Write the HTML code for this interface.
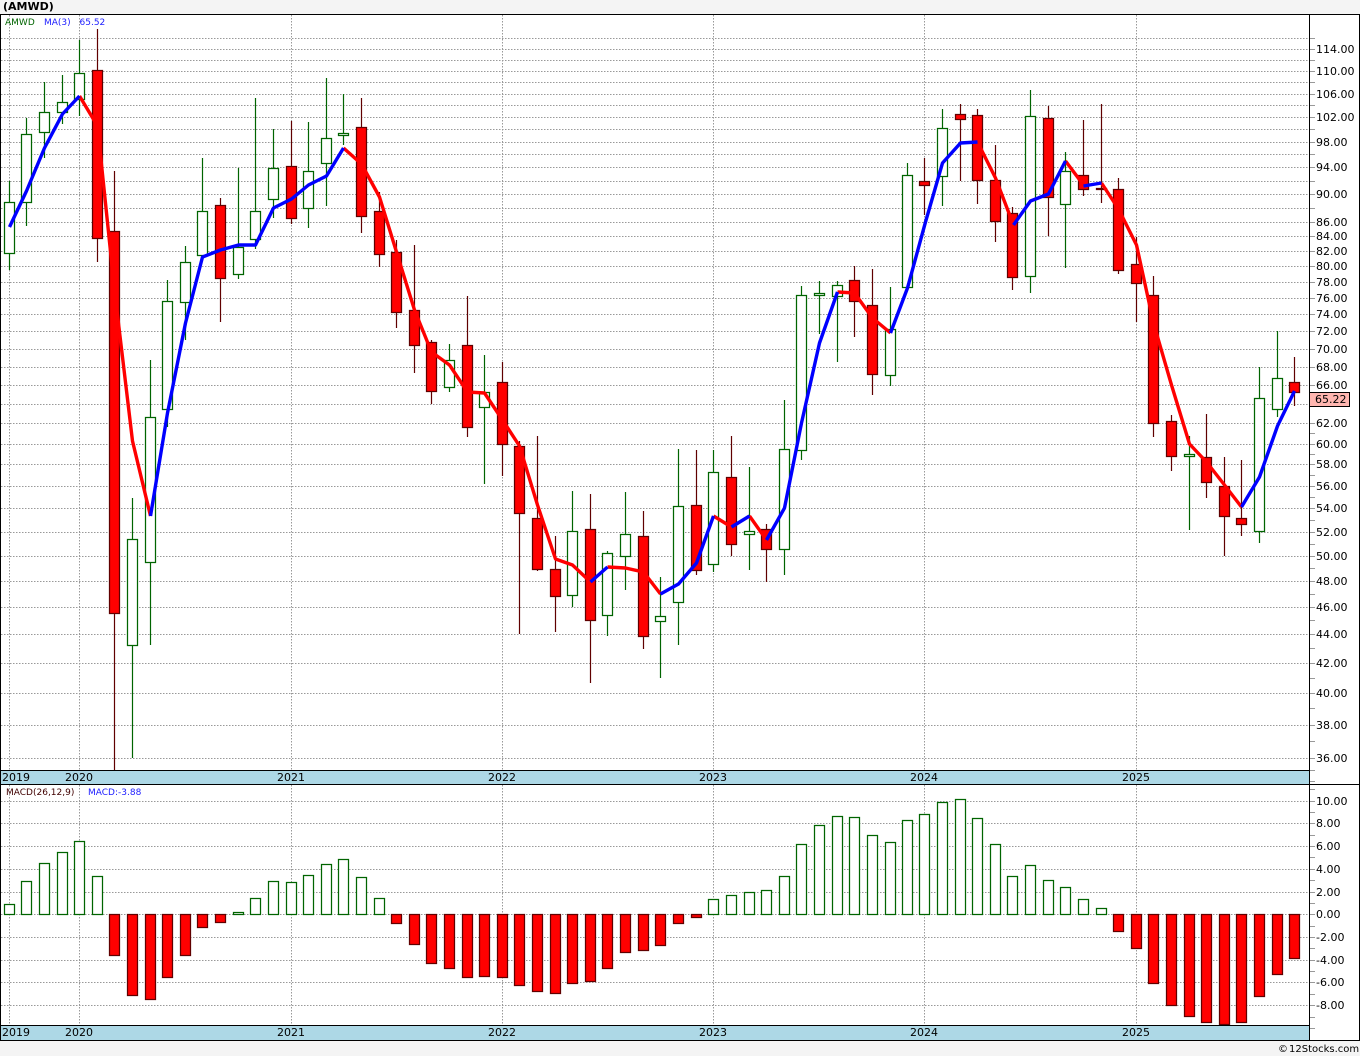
<!DOCTYPE html>
<html><head><meta charset="utf-8"><title>AMWD</title>
<style>
html,body{margin:0;padding:0;background:#f4f4f4}
svg{display:block}
text{font-family:"DejaVu Sans","Liberation Sans",sans-serif;font-size:11px;fill:#000}
</style></head><body>
<svg xmlns="http://www.w3.org/2000/svg" width="1360" height="1056" viewBox="0 0 1360 1056">
<rect width="1360" height="1056" fill="#f4f4f4"/>
<rect x="0" y="14" width="1360" height="1026" fill="#fff"/>
<rect x="0" y="770" width="1309" height="14" fill="#add8e6"/>
<rect x="0" y="1025" width="1309" height="15" fill="#add8e6"/>
<g fill="none">
<path stroke="#999" stroke-dasharray="1.5 1.5" d="M1 38.5H1309M1 49.5H1309M1 60.5H1309M1 71.5H1309M1 82.5H1309M1 94.5H1309M1 105.5H1309M1 117.5H1309M1 129.5H1309M1 142.5H1309M1 154.5H1309M1 167.5H1309M1 181.5H1309M1 194.5H1309M1 208.5H1309M1 222.5H1309M1 236.5H1309M1 251.5H1309M1 266.5H1309M1 282.5H1309M1 298.5H1309M1 314.5H1309M1 331.5H1309M1 349.5H1309M1 367.5H1309M1 385.5H1309M1 404.5H1309M1 423.5H1309M1 444.5H1309M1 464.5H1309M1 486.5H1309M1 508.5H1309M1 532.5H1309M1 556.5H1309M1 581.5H1309M1 607.5H1309M1 634.5H1309M1 663.5H1309M1 693.5H1309M1 725.5H1309M1 758.5H1309
M1 801.5H1309M1 823.5H1309M1 846.5H1309M1 869.5H1309M1 892.5H1309M1 914.5H1309M1 937.5H1309M1 960.5H1309M1 982.5H1309M1 1005.5H1309
M9.5 15V770M79.5 15V770M291.5 15V770M502.5 15V770M713.5 15V770M924.5 15V770M1136.5 15V770
M9.5 785V1025M79.5 785V1025M291.5 785V1025M502.5 785V1025M713.5 785V1025M924.5 785V1025M1136.5 785V1025"/>
<path stroke="#999" shape-rendering="crispEdges" d="M1310 38.5H1315M1310 49.5H1315M1310 60.5H1315M1310 71.5H1315M1310 82.5H1315M1310 94.5H1315M1310 105.5H1315M1310 117.5H1315M1310 129.5H1315M1310 142.5H1315M1310 154.5H1315M1310 167.5H1315M1310 181.5H1315M1310 194.5H1315M1310 208.5H1315M1310 222.5H1315M1310 236.5H1315M1310 251.5H1315M1310 266.5H1315M1310 282.5H1315M1310 298.5H1315M1310 314.5H1315M1310 331.5H1315M1310 349.5H1315M1310 367.5H1315M1310 385.5H1315M1310 404.5H1315M1310 423.5H1315M1310 433.5H1315M1310 444.5H1315M1310 454.5H1315M1310 464.5H1315M1310 475.5H1315M1310 486.5H1315M1310 497.5H1315M1310 508.5H1315M1310 520.5H1315M1310 532.5H1315M1310 544.5H1315M1310 556.5H1315M1310 568.5H1315M1310 581.5H1315M1310 594.5H1315M1310 607.5H1315M1310 620.5H1315M1310 634.5H1315M1310 648.5H1315M1310 663.5H1315M1310 678.5H1315M1310 693.5H1315M1310 708.5H1315M1310 725.5H1315M1310 741.5H1315M1310 758.5H1315M1310 770.5H1315M1310 781.5H1315
M1310 789.5H1315M1310 801.5H1315M1310 812.5H1315M1310 823.5H1315M1310 835.5H1315M1310 846.5H1315M1310 857.5H1315M1310 869.5H1315M1310 880.5H1315M1310 892.5H1315M1310 903.5H1315M1310 914.5H1315M1310 926.5H1315M1310 937.5H1315M1310 948.5H1315M1310 960.5H1315M1310 971.5H1315M1310 982.5H1315M1310 994.5H1315M1310 1005.5H1315M1310 1017.5H1315M1310 1028.5H1315"/>
<!-- wicks -->
<path stroke="#006400" stroke-width="1.2" d="M9.5 181V270M26.5 118V226M44.5 82V158M62.5 75V124M79.5 40V116M132.5 498V758M150.5 360V645M167.5 280V427M185.5 246V340M202.5 158V256M238.5 168V279M255.5 98V249M273.5 129V218M308.5 122V228M326.5 78V206M343.5 94V145M449.5 344V392M484.5 355V484M572.5 491V607M607.5 551V636M625.5 492V590M660.5 577V678M678.5 449V645M713.5 450V572M749.5 467V570M784.5 400V575M801.5 286V460M819.5 281V334M837.5 281V362M890.5 287V386M907.5 163V287M942.5 109V206M1030.5 90V293M1065.5 152V268M1189.5 436V530M1259.5 367V543M1277.5 331V417"/>
<path stroke="#600000" stroke-width="1.2" d="M97.5 29V262M114.5 171V770M220.5 198V322M291.5 121V224M361.5 98V233M379.5 192V267M396.5 240V328M414.5 245V373M431.5 340V404M467.5 296V437M502.5 362V476M519.5 441V634M537.5 436V571M555.5 536V632M590.5 494V683M643.5 511V649M696.5 450V575M731.5 436V556M766.5 524V582M854.5 266V337M872.5 269V395M924.5 158V215M960.5 104V181M977.5 109V204M995.5 145V242M1012.5 207V290M1048.5 106V236M1083.5 120V196M1101.5 104V203M1118.5 178V274M1136.5 237V322M1153.5 276V437M1171.5 415V471M1206.5 414V498M1224.5 457V556M1241.5 460V536M1294.5 357V406"/>
<!-- green bodies -->
<g fill="#fff" stroke="#006400" stroke-width="1.25">
<rect x="4.5" y="202.5" width="10" height="51"/><rect x="21.5" y="134.5" width="10" height="68"/><rect x="39.5" y="112.5" width="10" height="20"/><rect x="57.5" y="102.5" width="10" height="10"/><rect x="74.5" y="73.5" width="10" height="26"/><rect x="127.5" y="539.5" width="10" height="106"/><rect x="145.5" y="417.5" width="10" height="145"/><rect x="162.5" y="301.5" width="10" height="108"/><rect x="180.5" y="262.5" width="10" height="40"/><rect x="197.5" y="211.5" width="10" height="44"/><rect x="233.5" y="247.5" width="10" height="27"/><rect x="250.5" y="211.5" width="10" height="28"/><rect x="268.5" y="168.5" width="10" height="31"/><rect x="303.5" y="171.5" width="10" height="37"/><rect x="321.5" y="138.5" width="10" height="25"/><rect x="338.5" y="133.5" width="10" height="2"/><rect x="444.5" y="360.5" width="10" height="27"/><rect x="479.5" y="392.5" width="10" height="15"/><rect x="567.5" y="531.5" width="10" height="64"/><rect x="602.5" y="553.5" width="10" height="62"/><rect x="620.5" y="534.5" width="10" height="22"/><rect x="655.5" y="616.5" width="10" height="5"/><rect x="673.5" y="506.5" width="10" height="96"/><rect x="708.5" y="472.5" width="10" height="92"/><rect x="744.5" y="531.5" width="10" height="3"/><rect x="779.5" y="449.5" width="10" height="100"/><rect x="796.5" y="295.5" width="10" height="155"/><rect x="814.5" y="293.5" width="10" height="2"/><rect x="832.5" y="285.5" width="10" height="11"/><rect x="885.5" y="329.5" width="10" height="46"/><rect x="902.5" y="175.5" width="10" height="112"/><rect x="937.5" y="128.5" width="10" height="48"/><rect x="1025.5" y="116.5" width="10" height="160"/><rect x="1060.5" y="171.5" width="10" height="33"/><rect x="1184.5" y="454.5" width="10" height="2"/><rect x="1254.5" y="398.5" width="10" height="133"/><rect x="1272.5" y="378.5" width="10" height="31"/>
</g>
<!-- red bodies -->
<g fill="#f00" stroke="#600000" stroke-width="1.25">
<rect x="92.5" y="70.5" width="10" height="168"/><rect x="109.5" y="231.5" width="10" height="382"/><rect x="215.5" y="205.5" width="10" height="73"/><rect x="286.5" y="166.5" width="10" height="52"/><rect x="356.5" y="127.5" width="10" height="89"/><rect x="374.5" y="211.5" width="10" height="43"/><rect x="391.5" y="252.5" width="10" height="60"/><rect x="409.5" y="310.5" width="10" height="35"/><rect x="426.5" y="342.5" width="10" height="49"/><rect x="462.5" y="345.5" width="10" height="82"/><rect x="497.5" y="382.5" width="10" height="62"/><rect x="514.5" y="446.5" width="10" height="67"/><rect x="532.5" y="518.5" width="10" height="51"/><rect x="550.5" y="569.5" width="10" height="27"/><rect x="585.5" y="529.5" width="10" height="91"/><rect x="638.5" y="536.5" width="10" height="100"/><rect x="691.5" y="505.5" width="10" height="65"/><rect x="726.5" y="477.5" width="10" height="67"/><rect x="761.5" y="529.5" width="10" height="20"/><rect x="849.5" y="280.5" width="10" height="21"/><rect x="867.5" y="305.5" width="10" height="69"/><rect x="919.5" y="181.5" width="10" height="4"/><rect x="955.5" y="114.5" width="10" height="5"/><rect x="972.5" y="115.5" width="10" height="65"/><rect x="990.5" y="180.5" width="10" height="41"/><rect x="1007.5" y="213.5" width="10" height="64"/><rect x="1043.5" y="118.5" width="10" height="79"/><rect x="1078.5" y="175.5" width="10" height="14"/><rect x="1096.5" y="188.5" width="10" height="1"/><rect x="1113.5" y="189.5" width="10" height="81"/><rect x="1131.5" y="264.5" width="10" height="19"/><rect x="1148.5" y="295.5" width="10" height="128"/><rect x="1166.5" y="421.5" width="10" height="35"/><rect x="1201.5" y="457.5" width="10" height="25"/><rect x="1219.5" y="486.5" width="10" height="30"/><rect x="1236.5" y="518.5" width="10" height="6"/><rect x="1289.5" y="382.5" width="10" height="10"/>
</g>
<!-- MACD green -->
<g fill="#fff" stroke="#006400" stroke-width="1.25">
<rect x="4.5" y="904.5" width="10" height="10"/><rect x="21.5" y="881.5" width="10" height="33"/><rect x="39.5" y="863.5" width="10" height="51"/><rect x="57.5" y="852.5" width="10" height="62"/><rect x="74.5" y="841.5" width="10" height="73"/><rect x="92.5" y="876.5" width="10" height="38"/><rect x="233.5" y="912.5" width="10" height="2"/><rect x="250.5" y="898.5" width="10" height="16"/><rect x="268.5" y="881.5" width="10" height="33"/><rect x="286.5" y="882.5" width="10" height="32"/><rect x="303.5" y="875.5" width="10" height="39"/><rect x="321.5" y="864.5" width="10" height="50"/><rect x="338.5" y="859.5" width="10" height="55"/><rect x="356.5" y="877.5" width="10" height="37"/><rect x="374.5" y="898.5" width="10" height="16"/><rect x="708.5" y="899.5" width="10" height="15"/><rect x="726.5" y="895.5" width="10" height="19"/><rect x="744.5" y="892.5" width="10" height="22"/><rect x="761.5" y="890.5" width="10" height="24"/><rect x="779.5" y="876.5" width="10" height="38"/><rect x="796.5" y="844.5" width="10" height="70"/><rect x="814.5" y="825.5" width="10" height="89"/><rect x="832.5" y="816.5" width="10" height="98"/><rect x="849.5" y="817.5" width="10" height="97"/><rect x="867.5" y="835.5" width="10" height="79"/><rect x="885.5" y="842.5" width="10" height="72"/><rect x="902.5" y="820.5" width="10" height="94"/><rect x="919.5" y="814.5" width="10" height="100"/><rect x="937.5" y="802.5" width="10" height="112"/><rect x="955.5" y="799.5" width="10" height="115"/><rect x="972.5" y="818.5" width="10" height="96"/><rect x="990.5" y="844.5" width="10" height="70"/><rect x="1007.5" y="876.5" width="10" height="38"/><rect x="1025.5" y="865.5" width="10" height="49"/><rect x="1043.5" y="880.5" width="10" height="34"/><rect x="1060.5" y="887.5" width="10" height="27"/><rect x="1078.5" y="899.5" width="10" height="15"/><rect x="1096.5" y="908.5" width="10" height="6"/>
</g>
<!-- MACD red -->
<g fill="#f00" stroke="#600000" stroke-width="1.25">
<rect x="109.5" y="914.5" width="10" height="41"/><rect x="127.5" y="914.5" width="10" height="81"/><rect x="145.5" y="914.5" width="10" height="85"/><rect x="162.5" y="914.5" width="10" height="63"/><rect x="180.5" y="914.5" width="10" height="41"/><rect x="197.5" y="914.5" width="10" height="13"/><rect x="215.5" y="914.5" width="10" height="8"/><rect x="391.5" y="914.5" width="10" height="9"/><rect x="409.5" y="914.5" width="10" height="30"/><rect x="426.5" y="914.5" width="10" height="49"/><rect x="444.5" y="914.5" width="10" height="54"/><rect x="462.5" y="914.5" width="10" height="63"/><rect x="479.5" y="914.5" width="10" height="62"/><rect x="497.5" y="914.5" width="10" height="63"/><rect x="514.5" y="914.5" width="10" height="71"/><rect x="532.5" y="914.5" width="10" height="77"/><rect x="550.5" y="914.5" width="10" height="79"/><rect x="567.5" y="914.5" width="10" height="69"/><rect x="585.5" y="914.5" width="10" height="67"/><rect x="602.5" y="914.5" width="10" height="54"/><rect x="620.5" y="914.5" width="10" height="38"/><rect x="638.5" y="914.5" width="10" height="36"/><rect x="655.5" y="914.5" width="10" height="31"/><rect x="673.5" y="914.5" width="10" height="9"/><rect x="691.5" y="914.5" width="10" height="3"/><rect x="1113.5" y="914.5" width="10" height="17"/><rect x="1131.5" y="914.5" width="10" height="34"/><rect x="1148.5" y="914.5" width="10" height="69"/><rect x="1166.5" y="914.5" width="10" height="91"/><rect x="1184.5" y="914.5" width="10" height="102"/><rect x="1201.5" y="914.5" width="10" height="108"/><rect x="1219.5" y="914.5" width="10" height="110"/><rect x="1236.5" y="914.5" width="10" height="108"/><rect x="1254.5" y="914.5" width="10" height="82"/><rect x="1272.5" y="914.5" width="10" height="60"/><rect x="1289.5" y="914.5" width="10" height="44"/>
</g>
</g>
<!-- moving average -->
<g fill="none" stroke-width="3.4" stroke-linejoin="round" stroke-linecap="butt">
<g stroke="#f00">
<polyline points="79.5,96 97.5,126 114.5,290 132.5,441 150.5,516"/>
<polyline points="343.5,148 361.5,164 379.5,197 396.5,252 414.5,310 431.5,352 449.5,365 467.5,392 484.5,393 502.5,420 519.5,446 537.5,505 555.5,559 572.5,565 590.5,582"/>
<polyline points="607.5,567 625.5,568 643.5,572 660.5,594"/>
<polyline points="713.5,516 731.5,527"/>
<polyline points="749.5,516 766.5,540"/>
<polyline points="837.5,292 854.5,293 872.5,318 890.5,333"/>
<polyline points="977.5,142 995.5,178 1013.5,225"/>
<polyline points="1065.5,161 1083.5,185"/>
<polyline points="1101.5,183 1118.5,209 1136.5,245 1153.5,323 1171.5,385 1189.5,444 1206.5,462 1224.5,485 1241.5,507"/>
</g>
<g stroke="#00f">
<polyline points="9.5,227 26.5,191 44.5,148 62.5,114 79.5,96"/>
<polyline points="150.5,516 167.5,413 185.5,323 202.5,257 220.5,250 238.5,245 255.5,245 273.5,208 291.5,199 308.5,185 326.5,176 343.5,148"/>
<polyline points="590.5,582 607.5,567"/>
<polyline points="660.5,594 678.5,584 696.5,563 713.5,516"/>
<polyline points="731.5,527 749.5,516"/>
<polyline points="766.5,540 784.5,508 801.5,423 819.5,343 837.5,292"/>
<polyline points="890.5,333 907.5,288 925.5,222 942.5,163 960.5,143 977.5,142"/>
<polyline points="1013.5,225 1030.5,201 1048.5,194 1065.5,161"/>
<polyline points="1083.5,186 1101.5,183"/>
<polyline points="1241.5,507 1259.5,477 1277.5,426 1294.5,391"/>
</g>
</g>
<!-- frame -->
<g shape-rendering="crispEdges" stroke="#000" fill="none">
<path d="M0 14.5H1360M0 784.5H1360M0 1040.5H1360M0 770.5H1309M0 1025.5H1309M1309.5 14V1040M0.5 14V1040M1359.5 14V1040"/>
</g>
<!-- price box -->
<rect x="1309.5" y="392.5" width="40" height="14" fill="#ffb6b0" stroke="#000" shape-rendering="crispEdges"/>
<!-- texts -->
<text x="3" y="10" style="font-weight:bold">(AMWD)</text>
<text x="5" y="25" style="font-size:9px;fill:#006400">AMWD</text>
<text x="44" y="25" style="font-size:9px;fill:#2020ff">MA(3)</text>
<text x="79.5" y="25" style="font-size:9px;fill:#2020ff">65.52</text>
<text x="6" y="795" style="font-size:9px;fill:#400000">MACD(26,12,9)</text>
<text x="88" y="795" style="font-size:9px;fill:#2020ff">MACD:-3.88</text>
<g>
<text x="2" y="781">2019</text><text x="65" y="781">2020</text><text x="277" y="781">2021</text><text x="488" y="781">2022</text><text x="699" y="781">2023</text><text x="910" y="781">2024</text><text x="1122" y="781">2025</text>
<text x="2" y="1036">2019</text><text x="65" y="1036">2020</text><text x="277" y="1036">2021</text><text x="488" y="1036">2022</text><text x="699" y="1036">2023</text><text x="910" y="1036">2024</text><text x="1122" y="1036">2025</text>
</g>
<g>
<text x="1316" y="53">114.00</text><text x="1316" y="75">110.00</text><text x="1316" y="98">106.00</text><text x="1316" y="121">102.00</text>
<text x="1316" y="146">98.00</text><text x="1316" y="171">94.00</text><text x="1316" y="198">90.00</text><text x="1316" y="226">86.00</text><text x="1316" y="240">84.00</text><text x="1316" y="255">82.00</text><text x="1316" y="270">80.00</text><text x="1316" y="286">78.00</text><text x="1316" y="302">76.00</text><text x="1316" y="318">74.00</text><text x="1316" y="335">72.00</text><text x="1316" y="353">70.00</text><text x="1316" y="371">68.00</text><text x="1316" y="389">66.00</text>
<text x="1316" y="427">62.00</text><text x="1316" y="448">60.00</text><text x="1316" y="468">58.00</text><text x="1316" y="490">56.00</text><text x="1316" y="512">54.00</text><text x="1316" y="536">52.00</text><text x="1316" y="560">50.00</text><text x="1316" y="585">48.00</text><text x="1316" y="611">46.00</text><text x="1316" y="638">44.00</text><text x="1316" y="667">42.00</text><text x="1316" y="697">40.00</text><text x="1316" y="729">38.00</text><text x="1316" y="762">36.00</text>
<text x="1315" y="403">65.22</text>
<text x="1316" y="805">10.00</text><text x="1316" y="827">8.00</text><text x="1316" y="850">6.00</text><text x="1316" y="873">4.00</text><text x="1316" y="896">2.00</text><text x="1316" y="918">0.00</text>
<text x="1316" y="941">-2.00</text><text x="1316" y="964">-4.00</text><text x="1316" y="986">-6.00</text><text x="1316" y="1009">-8.00</text>
</g>
<text x="1278" y="1052" style="font-size:10px">©</text>
<text x="1289" y="1052" style="font-size:10px">12Stocks.com</text>
</svg>
</body></html>
